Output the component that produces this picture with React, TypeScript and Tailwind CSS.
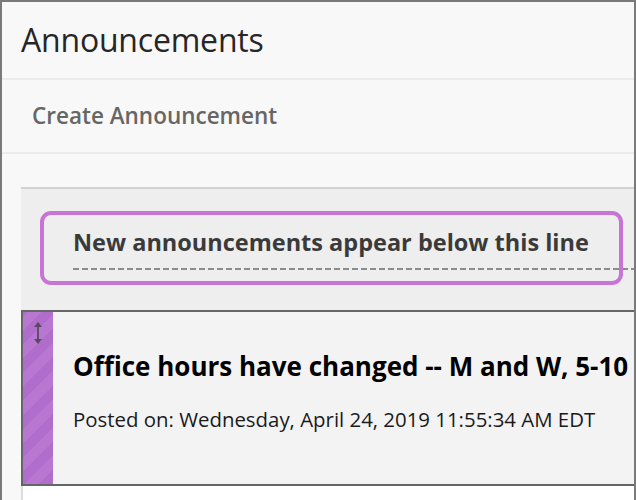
import React from "react";

export default function App() {
  return (
    <div className="w-[636px] h-[500px] overflow-hidden bg-[#f8f8f8] border-l-2 border-t-2 border-r-2 border-[#7a7a7a] font-['Open_Sans',sans-serif] flex flex-col">
      <div className="h-[78px] shrink-0 flex items-center pl-[19px] border-b-2 border-[#ebebeb]">
        <h1 className="text-[32px] leading-none text-[#262626] font-normal tracking-[-0.2px]">Announcements</h1>
      </div>
      <div className="h-[74px] shrink-0 flex items-center pl-[30px] border-b-2 border-[#ebebeb]">
        <span className="text-[22.5px] font-semibold text-[#666666] leading-none">Create Announcement</span>
      </div>
      <div className="h-[33px] shrink-0" />
      <div className="relative ml-[19px] shrink-0 bg-[#eeeeee] border-t-2 border-[#d2d2d2] h-[123px]">
        <div className="absolute left-[52px] right-0 top-[36px]">
          <div className="text-[23.5px] font-bold text-[#3a3a3a] leading-[34px] whitespace-nowrap">New announcements appear below this line</div>
          <div className="mt-[9px] h-[2px] bg-[linear-gradient(to_right,#8c8c8c_0,#8c8c8c_6px,transparent_6px)] bg-[length:9px_2px] bg-repeat-x" />
        </div>
        <div className="absolute left-[19px] top-[22px] w-[583px] h-[74px] rounded-[11px] border-4 border-[#c774d6]" />
      </div>
      <div className="flex ml-[19px] shrink-0 h-[176px] border-2 border-r-0 border-[#666666] bg-[#f3f3f4]">
        <div className="w-[30px] shrink-0 bg-[repeating-linear-gradient(-45deg,#b06dcb_0px,#b06dcb_10px,#b877d1_10px,#b877d1_20px)] flex justify-center pt-[8px]">
          <svg width="10" height="26" viewBox="0 0 10 26" fill="none">
            <path d="M5 3 L5 23" stroke="#5a4a60" strokeWidth="1.8" />
            <path d="M1 7 L5 2 L9 7 Z" fill="#5a4a60" />
            <path d="M1 19 L5 24 L9 19 Z" fill="#5a4a60" />
          </svg>
        </div>
        <div className="pl-[20px] pt-[36px]">
          <div className="text-[26px] font-bold text-black leading-[36px] whitespace-nowrap">Office hours have changed -- M and W, 5-10</div>
          <div className="mt-[21px] text-[20.4px] text-[#1a1a1a] leading-[28px] whitespace-nowrap">Posted on: Wednesday, April 24, 2019 11:55:34 AM EDT</div>
        </div>
      </div>
      <div className="flex-1 ml-[19px] bg-white border-l-2 border-[#dddddd]" />
    </div>
  );
}
